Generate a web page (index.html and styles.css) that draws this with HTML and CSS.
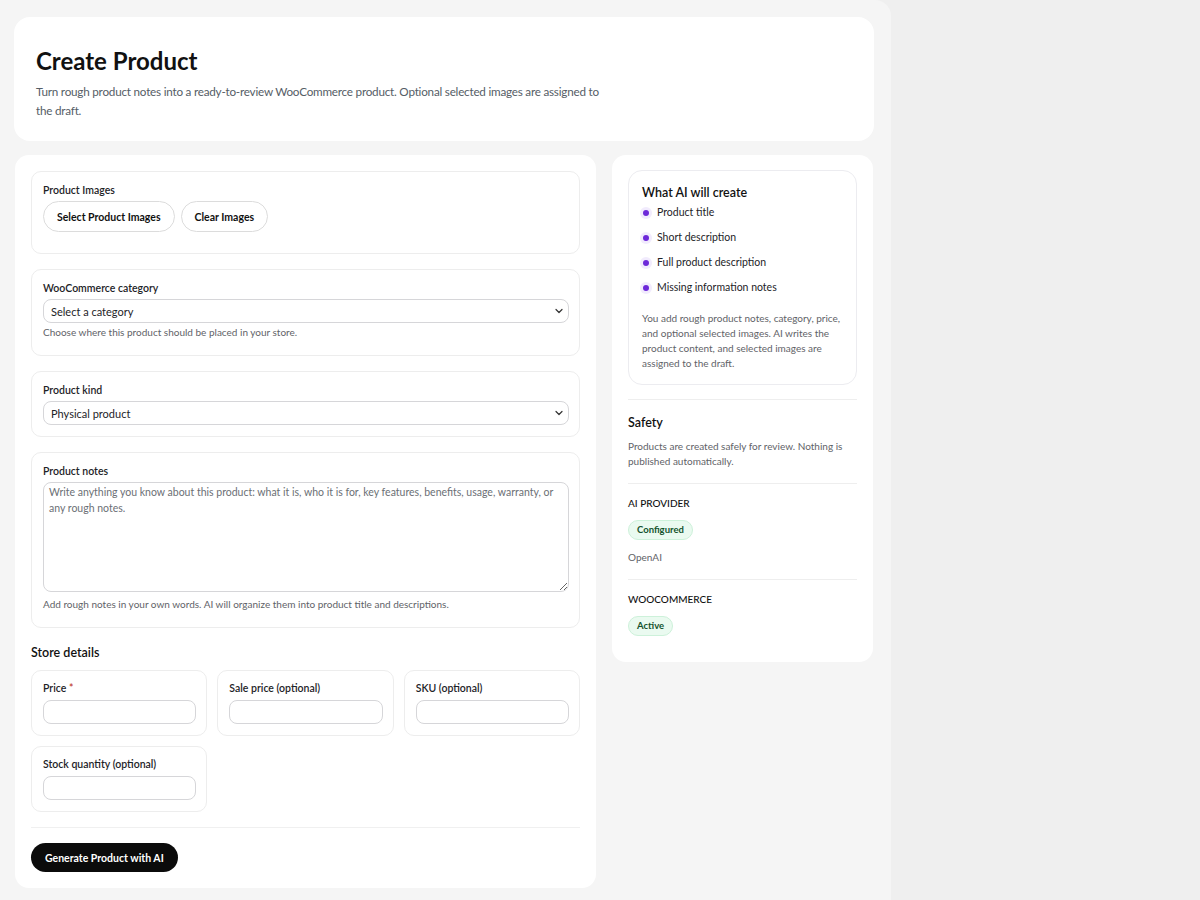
FILE: index.html
```html
<!DOCTYPE html>
<html lang="en">
<head>
<meta charset="UTF-8">
<meta name="viewport" content="width=device-width, initial-scale=1.0">
<title>Create Product</title>
<link rel="stylesheet" href="styles.css">
</head>
<body>

<div class="wrap">
  <div class="page-header">
    <h1>Create Product</h1>
    <p>Turn rough product notes into a ready-to-review WooCommerce product. Optional selected images are assigned to the draft.</p>
  </div>

  <div class="layout">
    <!-- main form -->
    <form class="card main-card">
      <div class="section">
        <div class="label">Product Images</div>
        <div class="btn-row">
          <button type="button" class="pill-button">Select Product Images</button>
          <button type="button" class="pill-button">Clear Images</button>
        </div>
      </div>

      <div class="section">
        <label class="label">WooCommerce category</label>
        <div class="select-wrap">
          <select class="field">
            <option>Select a category</option>
          </select>
          <svg class="chevron" width="10" height="10" viewBox="0 0 10 10"><path d="M2 3.5l3 3 3-3" fill="none" stroke="#333" stroke-width="1.2" stroke-linecap="round" stroke-linejoin="round"/></svg>
        </div>
        <div class="hint">Choose where this product should be placed in your store.</div>
      </div>

      <div class="section">
        <label class="label">Product kind</label>
        <div class="select-wrap">
          <select class="field">
            <option>Physical product</option>
          </select>
          <svg class="chevron" width="10" height="10" viewBox="0 0 10 10"><path d="M2 3.5l3 3 3-3" fill="none" stroke="#333" stroke-width="1.2" stroke-linecap="round" stroke-linejoin="round"/></svg>
        </div>
      </div>

      <div class="section">
        <label class="label">Product notes</label>
        <textarea class="field notes" placeholder="Write anything you know about this product: what it is, who it is for, key features, benefits, usage, warranty, or any rough notes."></textarea>
        <div class="hint">Add rough notes in your own words. AI will organize them into product title and descriptions.</div>
      </div>

      <h2 class="store-title">Store details</h2>
      <div class="store-grid">
        <div class="section small">
          <label class="label">Price <span class="req">*</span></label>
          <input type="text" class="field">
        </div>
        <div class="section small">
          <label class="label">Sale price (optional)</label>
          <input type="text" class="field">
        </div>
        <div class="section small">
          <label class="label">SKU (optional)</label>
          <input type="text" class="field">
        </div>
        <div class="section small">
          <label class="label">Stock quantity (optional)</label>
          <input type="text" class="field">
        </div>
      </div>

      <div class="actions">
        <button type="button" class="generate-button">Generate Product with AI</button>
      </div>
    </form>

    <!-- sidebar -->
    <aside class="card side-card">
      <div class="create-box">
        <h3>What AI will create</h3>
        <ul class="dot-list">
          <li>Product title</li>
          <li>Short description</li>
          <li>Full product description</li>
          <li>Missing information notes</li>
        </ul>
        <p class="muted">You add rough product notes, category, price, and optional selected images. AI writes the product content, and selected images are assigned to the draft.</p>
      </div>

      <div class="side-block">
        <h3>Safety</h3>
        <p class="muted">Products are created safely for review. Nothing is published automatically.</p>
      </div>

      <div class="side-block status">
        <div class="caps">AI PROVIDER</div>
        <span class="badge">Configured</span>
        <div class="muted provider">OpenAI</div>
      </div>

      <div class="side-block status">
        <div class="caps">WOOCOMMERCE</div>
        <span class="badge">Active</span>
      </div>
    </aside>
  </div>
</div>

</body>
</html>
```

FILE: styles.css
```css
body {
  margin: 0;
  font-family: Lato, 'Noto Sans', sans-serif;
  background-color: #efefef;
  color: #1d2327;
}
.wrap {
  width: 891px;
  box-sizing: border-box;
  background-color: #f5f5f5;
  border-top-right-radius: 16px;
  padding: 17px 17px 14px 14px;
  min-height: 100vh;
}
.page-header {
  background: #fff;
  border-radius: 16px;
  padding: 30px 22px 21px;
}
.page-header h1 {
  margin: 0 0 7px;
  font-size: 24px;
  font-weight: 700;
  color: #111;
  line-height: 28px;
}
.page-header p {
  margin: 0;
  max-width: 575px;
  font-size: 11.7px;
  letter-spacing: -0.22px;
  line-height: 19px;
  color: #555d66;
}
.layout {
  display: grid;
  grid-template-columns: 582px 261px;
  gap: 16px;
  margin-top: 14px;
  align-items: start;
}
.card {
  background: #fff;
  border-radius: 14px;
  padding: 16px;
}
.main-card {
  margin-left: 1px;
  padding-bottom: 16px;
}
.section {
  border: 1px solid #ededed;
  border-radius: 10px;
  padding: 12px 10px 11px 11px;
  margin-bottom: 15px;
}
.label {
  display: block;
  font-size: 10.5px;
  font-weight: 600;
  color: #1d2327;
  margin-bottom: 5px;
}
.req {
  color: #c0392b;
}
.btn-row {
  display: flex;
  gap: 6px;
  margin-bottom: 10px;
}
.pill-button {
  border: 1px solid #dcdcdc;
  background: #fff;
  border-radius: 16px;
  height: 31px;
  padding: 0 13px;
  font-family: inherit;
  font-size: 10.5px;
  font-weight: 700;
  color: #111;
  cursor: pointer;
}
.field {
  display: block;
  width: 100%;
  box-sizing: border-box;
  border: 1px solid #d6d6d9;
  border-radius: 8px;
  background: #fff;
  font-family: inherit;
  font-size: 11px;
  color: #1d2327;
  height: 24px;
  padding: 0 7px;
  outline: none;
}
select.field {
  -webkit-appearance: none;
  appearance: none;
}
.select-wrap {
  position: relative;
}
.chevron {
  position: absolute;
  right: 5px;
  top: 7px;
  pointer-events: none;
}
.hint {
  font-size: 10px;
  line-height: 16px;
  color: #5f6368;
  margin: 1px 0 4px;
}
.notes {
  height: 110px;
  padding: 1px 5px;
  font-size: 10.5px;
  line-height: 16px;
  resize: vertical;
}
.notes + .hint {
  margin-top: 4px;
}
.notes::placeholder {
  color: #6b6f75;
}
.store-title {
  font-size: 12.5px;
  font-weight: 600;
  margin: 17px 0 10px;
  color: #111;
}
.store-grid {
  display: grid;
  grid-template-columns: repeat(3, 1fr);
  column-gap: 10px;
  row-gap: 10px;
}
.section.small {
  margin-bottom: 0;
  padding: 11px 10px 11px 11px;
}
.section.small .label {
  margin-bottom: 6px;
}
.actions {
  border-top: 1px solid #f0f0f0;
  margin-top: 15px;
  padding-top: 15px;
}
.generate-button {
  background: #0b0b0b;
  color: #fff;
  border: none;
  border-radius: 16px;
  height: 29px;
  padding: 0 14px;
  font-family: inherit;
  font-size: 10.5px;
  font-weight: 700;
  cursor: pointer;
}
.side-card {
  padding: 15px 16px 26px;
}
.create-box {
  border: 1px solid #ececf0;
  border-radius: 14px;
  padding: 14px 13px 13px;
}
h3 {
  margin: 0;
  font-size: 12.5px;
  font-weight: 600;
  color: #111;
}
.dot-list {
  list-style: none;
  margin: 0 0 11px;
  padding: 0;
}
.dot-list li {
  display: flex;
  align-items: center;
  gap: 8px;
  font-size: 10.5px;
  line-height: 25px;
  color: #1d2327;
}
.dot-list li::before {
  content: "";
  width: 6px;
  height: 6px;
  border-radius: 50%;
  background: #6d28d9;
  box-shadow: 0 0 0 3px #f1ebfd;
  margin-left: 1px;
}
.muted {
  margin: 0;
  font-size: 10px;
  line-height: 15px;
  color: #5f6368;
}
.side-block {
  border-top: 1px solid #eeeeee;
  margin-top: 14px;
  padding-top: 15px;
}
.side-block h3 {
  margin-bottom: 9px;
}
.side-block.status {
  padding-top: 13px;
}
.caps {
  font-size: 10px;
  line-height: 12px;
  font-weight: 500;
  color: #111;
  margin-bottom: 11px;
}
.badge {
  display: block;
  width: fit-content;
  box-sizing: border-box;
  height: 20px;
  line-height: 18px;
  background: #eafaf0;
  border: 1px solid #cdf1da;
  color: #14532d;
  border-radius: 10px;
  font-size: 9.5px;
  font-weight: 700;
  padding: 0 8px;
}
.provider {
  margin-top: 10px;
}
```
